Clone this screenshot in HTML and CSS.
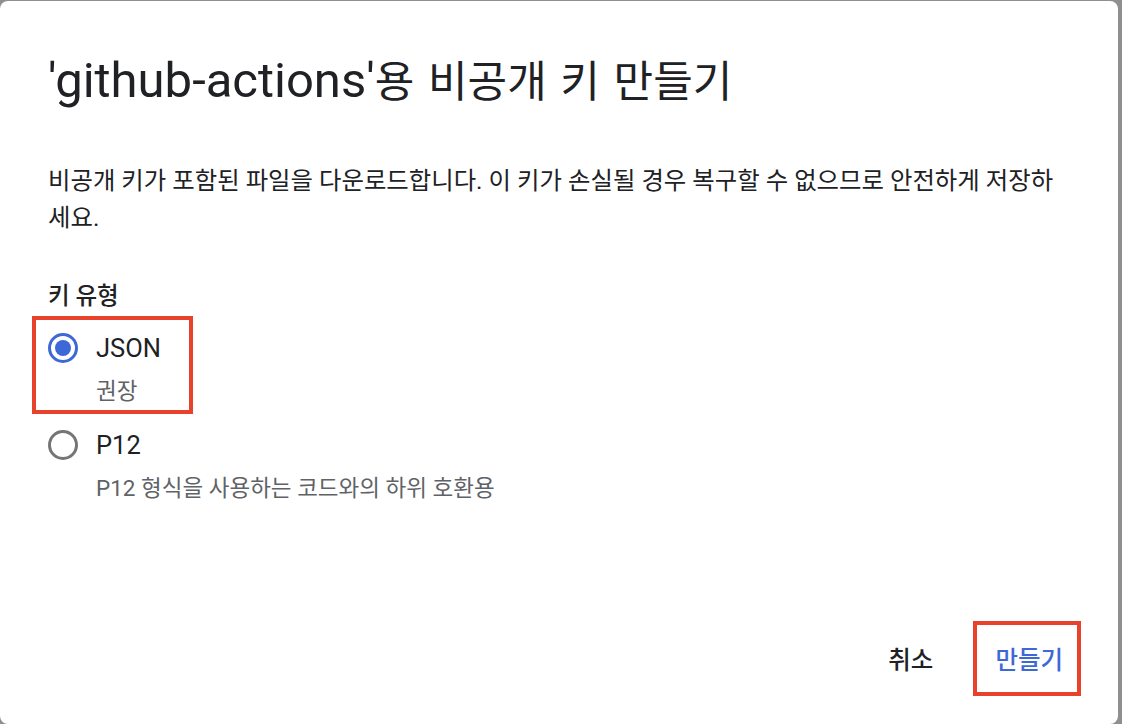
FILE: index.html
```html
<!DOCTYPE html>
<html lang="ko">

<head>
    <meta charset="UTF-8">
    <title>비공개 키 만들기</title>
    <link rel="stylesheet" href="styles.css">
</head>

<body>
    <div class="dialog">
        <h1 class="title">'github-actions'<span class="title-ko">용 비공개 키 만들기</span></h1>
        <p class="desc">비공개 키가 포함된 파일을 다운로드합니다. 이 키가 손실될 경우 복구할 수 없으므로 안전하게 저장하세요.</p>

        <div class="label">키 유형</div>
        <div class="options">
            <label class="option marked">
                <span class="option-row">
                    <span class="radio checked"></span>
                    <span class="option-name">JSON</span>
                </span>
                <span class="option-hint">권장</span>
            </label>
            <label class="option">
                <span class="option-row">
                    <span class="radio"></span>
                    <span class="option-name">P12</span>
                </span>
                <span class="option-hint">P12 형식을 사용하는 코드와의 하위 호환용</span>
            </label>
        </div>

        <div class="actions">
            <button class="button cancel-button">취소</button>
            <button class="button create-button">만들기</button>
        </div>
    </div>
</body>

</html>
```

FILE: styles.css
```css
html,
body {
    height: 100%;
    margin: 0;
    font-family: Roboto, "Noto Sans CJK KR", sans-serif;
}

body {
    background: #8f8f8f;
    overflow: hidden;
}

.dialog {
    height: 723px;
    margin: 1px 4px 0 0;
    padding: 48px 48px 28px;
    background: #fff;
    border-radius: 8px;
    box-sizing: border-box;
    display: flex;
    flex-direction: column;
    color: #202124;
}

.title {
    margin: 0;
    font-size: 49px;
    font-weight: normal;
    line-height: 64px;
}

.title-ko {
    font-size: 43px;
    word-spacing: 3px;
}

.desc {
    margin: 48px 0 0;
    font-size: 24.4px;
    line-height: 37px;
}

.label {
    margin-top: 44px;
    font-size: 23.5px;
    font-weight: 500;
    line-height: 32px;
}

.options {
    display: flex;
    flex-direction: column;
    align-items: flex-start;
    margin: 4px 0 0 -16px;
}

.option {
    display: flex;
    flex-direction: column;
    padding: 13px 28px 5px 12px;
    border: 4px solid transparent;
    cursor: pointer;
}

.option + .option {
    margin-top: -1px;
}

.option.marked {
    border-color: #e8412c;
}

.option-row {
    display: flex;
    align-items: center;
    gap: 18px;
    height: 30px;
}

.radio {
    width: 30px;
    height: 30px;
    border: 3px solid #757575;
    border-radius: 50%;
    box-sizing: border-box;
    display: flex;
    justify-content: center;
    align-items: center;
}

.radio.checked {
    border-color: #3d68d8;
}

.radio.checked::after {
    content: "";
    width: 16px;
    height: 16px;
    border-radius: 50%;
    background: #3d68d8;
}

.option-name {
    font-size: 25.5px;
    line-height: 30px;
}

.option-hint {
    margin: 14px 0 0 48px;
    font-size: 22.5px;
    line-height: 28px;
    color: #5f6368;
}

.actions {
    margin: auto -11px 0 0;
    display: flex;
    justify-content: flex-end;
    align-items: center;
    gap: 22px;
}

.button {
    height: 75px;
    padding: 0 14px 0 18px;
    font-family: inherit;
    font-size: 24.5px;
    font-weight: 500;
    background: none;
    border: 4px solid transparent;
    cursor: pointer;
}

.cancel-button {
    color: #202124;
}

.create-button {
    color: #3d68d8;
    border-color: #e8412c;
}
```
